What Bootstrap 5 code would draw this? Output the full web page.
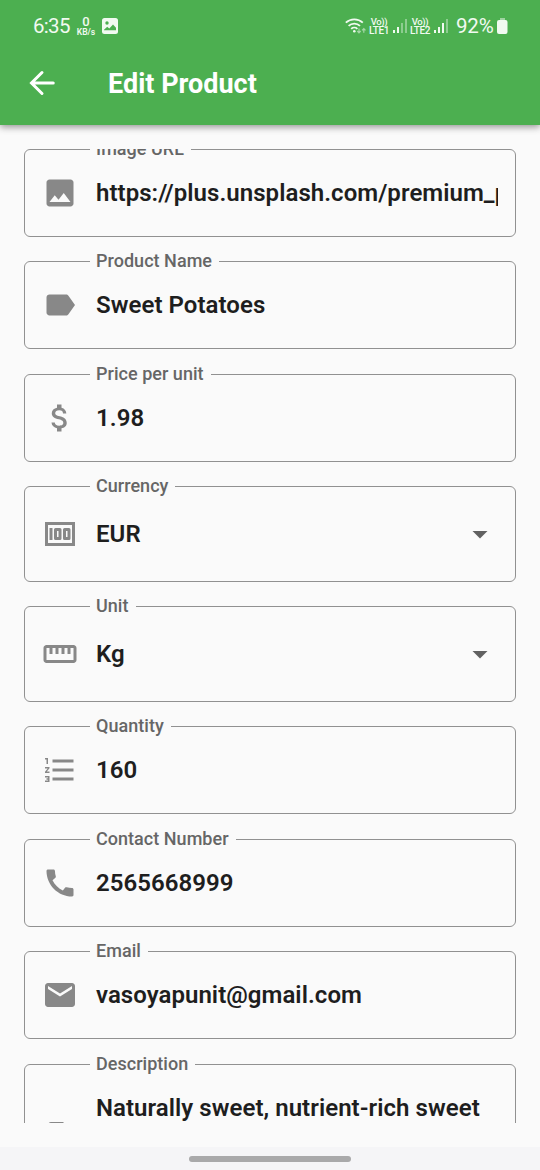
<!DOCTYPE html>
<html lang="en">
<head>
<meta charset="utf-8">
<meta name="viewport" content="width=device-width, initial-scale=1">
<title>Edit Product</title>
<link href="https://cdn.jsdelivr.net/npm/bootstrap@5.3.0/dist/css/bootstrap.min.css" rel="stylesheet">
<style>
  body { font-family: Roboto, "Liberation Sans", sans-serif; background: #fafafa; color: #1e1e1e; }
  .screen { height: 1170px; }
  .app-top { height: 125px; background: #4caf50; z-index: 2; box-shadow: 0 2px 7px rgba(0,0,0,.42); }
  .status { height: 52px; padding: 0 32px 0 33px; color: #f1faf1; }
  .clock { width: 37px; font-size: 20.5px; line-height: 24px; letter-spacing: -.7px; white-space: nowrap; }
  .rate { width: 20px; margin-left: 6px; }
  .rate-n { font-size: 13px; font-weight: 500; line-height: 12px; }
  .rate-u { font-size: 8.5px; font-weight: 600; line-height: 9px; }
  .lte { width: 20px; font-size: 10px; font-weight: 500; line-height: 9px; letter-spacing: -.35px; white-space: nowrap; }
  .lte .vo { font-size: 9.5px; line-height: 9px; letter-spacing: -.4px; }
  .pct { width: 38px; font-size: 20.5px; line-height: 24px; letter-spacing: -.2px; white-space: nowrap; }
  .titlebar { height: 62px; padding-left: 24px; }
  .titlebar h1 { font-size: 27px; font-weight: 700; margin: 1px 0 0 48px; line-height: 32px; white-space: nowrap; }
  .form-view { height: 974px; margin-top: 24px; padding: 0 24px; }
  .field { height: 88px; margin-bottom: 24.45px; border: 1px solid #919191; border-radius: 6px; padding: 0 17px 0 17px; }
  .field.pick { height: 95.5px; }
  .field.multi { height: 146px; }
  .field > svg { width: 36px; height: 36px; fill: #888; flex: none; }
  .tag { top: -12px; left: 65px; padding: 0 7px 0 6px; background: #fafafa; color: #666; font-size: 18px; font-weight: 500; letter-spacing: .03px; line-height: 22px; white-space: nowrap; }
  .value { margin-left: 18px; font-size: 24px; font-weight: 600; letter-spacing: .05px; line-height: 29px; padding-top: 1px; white-space: nowrap; }
  .field > svg.caret { fill: #616161; }
  .nav-strip { height: 23px; background: #f5f5f7; }
  .pill { width: 162px; height: 6px; border-radius: 3px; background: #a9a9aa; }
</style>
</head>
<body>
<div class="screen d-flex flex-column overflow-hidden">
  <header class="app-top position-relative text-white flex-shrink-0">
    <div class="status d-flex align-items-center">
      <span class="clock">6:35</span>
      <div class="rate text-center d-flex flex-column align-items-center"><span class="rate-n">0</span><span class="rate-u">KB/s</span></div>
      <svg width="16" height="16" viewBox="0 0 16 16" style="margin-left:6px"><rect width="16" height="16" rx="2.5" fill="#f1faf1"/><circle cx="5" cy="5" r="1.7" fill="#4caf50"/><path d="M2 11.700 5.200 8.800 7.300 10.500 11 6.500l3 3.300v2.500H2z" fill="#4caf50"/></svg>
      <div class="ms-auto d-flex align-items-center">
        <svg width="22" height="18" viewBox="0 0 22 18" fill="none" stroke="#f1faf1" stroke-width="1.8"><path d="M.8 5.700a12.500 12.500 0 0 1 17 0M3.600 8.900a8.300 8.300 0 0 1 11.400 0M6.200 11.800a4.600 4.600 0 0 1 6.200 0"/><circle cx="9.3" cy="14.2" r="1.3" fill="#f1faf1" stroke="none"/><path d="M14 11.500v4m-1.700-1.500 1.700 1.800 1.700-1.800M18.800 15.800v-4m-1.700 1.500 1.700-1.800 1.700 1.800" stroke="#a6d7a8" stroke-width="1.2"/></svg>
        <div class="lte d-flex flex-column align-items-center" style="margin-left:2px"><span class="vo">Vo))</span><span>LTE1</span></div>
        <svg width="15" height="16" viewBox="0 0 15 16" fill="#f1faf1" style="margin-left:4px"><path d="M0 12h2v3H0zM4 9h2v6H4z"/><path d="M8 5h2v10H8zM12 1h2v14h-2z" opacity=".4"/></svg>
        <div class="lte d-flex flex-column align-items-center" style="margin-left:2px"><span class="vo">Vo))</span><span>LTE2</span></div>
        <svg width="15" height="16" viewBox="0 0 15 16" fill="#f1faf1" style="margin-left:4px"><path d="M0 12h2v3H0zM4 9h2v6H4zM8 5h2v10H8z"/><path d="M12 1h2v14h-2z" opacity=".4"/></svg>
        <span class="pct" style="margin-left:7px">92%</span>
        <svg width="11" height="16" viewBox="0 0 11 16" style="margin-left:3px"><path d="M3 0h5v3H3z" fill="#9fd3a1"/><rect y="2" width="10.5" height="14" rx="2" fill="#f1faf1"/></svg>
      </div>
    </div>
    <div class="titlebar d-flex align-items-center">
      <svg width="36" height="36" viewBox="0 0 24 24" fill="none" stroke="#fff" stroke-width="2" stroke-linecap="round"><path d="M19.500 12H5.500M12 5 5 12l7 7"/></svg>
      <h1>Edit Product</h1>
    </div>
  </header>

  <main class="form-view overflow-hidden flex-shrink-0">
    <div class="field position-relative d-flex align-items-center">
      <span class="tag position-absolute">Image URL</span>
      <svg viewBox="0 0 24 24"><path d="M21 19V5c0-1.100-.900-2-2-2H5c-1.100 0-2 .900-2 2v14c0 1.100.900 2 2 2h14c1.100 0 2-.900 2-2zM8.500 13.500l2.500 3.010L14.500 12l4.500 6H5l3.500-4.500z"/></svg>
      <div class="value overflow-hidden">https://plus.unsplash.com/premium_photo</div>
    </div>
    <div class="field position-relative d-flex align-items-center">
      <span class="tag position-absolute">Product Name</span>
      <svg viewBox="0 0 24 24"><path d="M17.630 5.840C17.270 5.330 16.670 5 16 5L5 5.010C3.900 5.010 3 5.900 3 7v10c0 1.100.900 1.990 2 1.990L16 19c.670 0 1.270-.330 1.630-.840L22 12l-4.370-6.160z"/></svg>
      <div class="value">Sweet Potatoes</div>
    </div>
    <div class="field position-relative d-flex align-items-center">
      <span class="tag position-absolute">Price per unit</span>
      <svg viewBox="0 0 24 24"><path d="M11.800 10.900c-2.270-.590-3-1.200-3-2.150 0-1.090 1.010-1.850 2.700-1.850 1.780 0 2.440.850 2.500 2.100h2.210c-.070-1.720-1.120-3.300-3.210-3.810V3h-3v2.160c-1.940.420-3.500 1.680-3.500 3.610 0 2.310 1.910 3.460 4.700 4.130 2.500.600 3 1.480 3 2.410 0 .690-.490 1.790-2.700 1.790-2.060 0-2.870-.920-2.980-2.100h-2.200c.120 2.190 1.760 3.420 3.680 3.830V21h3v-2.150c1.950-.370 3.500-1.500 3.500-3.550 0-2.840-2.430-3.810-4.700-4.400z"/></svg>
      <div class="value">1.98</div>
    </div>
    <div class="field pick position-relative d-flex align-items-center">
      <span class="tag position-absolute">Currency</span>
      <svg viewBox="0 0 24 24"><path fill-rule="evenodd" d="M2 4h20v16H2zM4 6v12h16V6zM5 8h2v8H5zM9 8h3q1 0 1 1v6q0 1-1 1H9q-1 0-1-1V9q0-1 1-1zm1 2v4h1v-4zM15 8h3q1 0 1 1v6q0 1-1 1h-3q-1 0-1-1V9q0-1 1-1zm1 2v4h1v-4z"/></svg>
      <div class="value">EUR</div>
      <svg class="caret ms-auto" viewBox="0 0 24 24"><path d="M7 10l5 5 5-5z"/></svg>
    </div>
    <div class="field pick position-relative d-flex align-items-center">
      <span class="tag position-absolute">Unit</span>
      <svg viewBox="0 0 24 24"><path d="M21 6H3c-1.100 0-2 .900-2 2v8c0 1.100.900 2 2 2h18c1.100 0 2-.900 2-2V8c0-1.100-.900-2-2-2zm0 10H3V8h2v4h2V8h2v4h2V8h2v4h2V8h2v4h2V8h2v8z"/></svg>
      <div class="value">Kg</div>
      <svg class="caret ms-auto" viewBox="0 0 24 24"><path d="M7 10l5 5 5-5z"/></svg>
    </div>
    <div class="field position-relative d-flex align-items-center">
      <span class="tag position-absolute">Quantity</span>
      <svg viewBox="0 0 24 24"><path d="M2 17h2v.5H3v1h1v.5H2v1h3v-4H2v1zm1-9h1V4H2v1h1v3zm-1 3h1.800L2 13.100v.900h3v-1H3.200L5 10.900V10H2v1zm5-6v2h14V5H7zm0 14h14v-2H7v2zm0-6h14v-2H7v2z"/></svg>
      <div class="value">160</div>
    </div>
    <div class="field position-relative d-flex align-items-center">
      <span class="tag position-absolute">Contact Number</span>
      <svg viewBox="0 0 24 24"><path d="M20.010 15.380c-1.230 0-2.420-.200-3.530-.560-.350-.120-.740-.030-1.010.240l-1.570 1.970c-2.830-1.350-5.480-3.900-6.890-6.830l1.950-1.660c.270-.280.350-.670.240-1.020-.370-1.110-.560-2.300-.560-3.530 0-.540-.450-.990-.990-.990H4.190C3.650 3 3 3.240 3 3.990 3 13.280 10.730 21 20.010 21c.710 0 .990-.630.990-1.180v-3.450c0-.540-.450-.990-.990-.990z"/></svg>
      <div class="value">2565668999</div>
    </div>
    <div class="field position-relative d-flex align-items-center">
      <span class="tag position-absolute">Email</span>
      <svg viewBox="0 0 24 24"><path d="M20 4H4c-1.100 0-1.990.900-1.990 2L2 18c0 1.100.900 2 2 2h16c1.100 0 2-.900 2-2V6c0-1.100-.900-2-2-2zm0 4l-8 5-8-5V6l8 5 8-5v2z"/></svg>
      <div class="value">vasoyapunit@gmail.com</div>
    </div>
    <div class="field multi position-relative d-flex align-items-center">
      <span class="tag position-absolute">Description</span>
      <svg viewBox="0 0 24 24"><path d="M14 2H6c-1.100 0-1.990.900-1.990 2L4 20c0 1.100.890 2 1.990 2H18c1.100 0 2-.900 2-2V8l-6-6zm2 16H8v-2h8v2zm0-4H8v-2h8v2zm-3-5V3.500L18.500 9H13z"/></svg>
      <div class="value align-self-start" style="margin-top:28px">Naturally sweet, nutrient-rich sweet</div>
    </div>
  </main>

  <footer class="nav-strip mt-auto d-flex align-items-center justify-content-center flex-shrink-0">
    <div class="pill"></div>
  </footer>
</div>
<script src="https://cdn.jsdelivr.net/npm/bootstrap@5.3.0/dist/js/bootstrap.bundle.min.js"></script>
</body>
</html>
